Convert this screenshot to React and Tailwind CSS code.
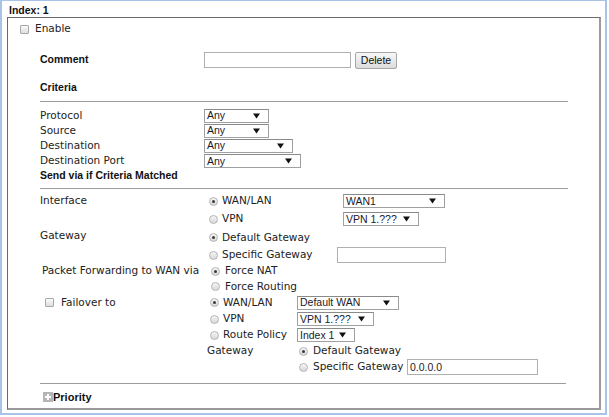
import React from 'react'

const LBL = "font-['DejaVu_Sans',sans-serif] text-[10.5px] text-[#222]"
const BOLD = "font-['Liberation_Sans',Arial,sans-serif] text-[10.5px] font-bold text-[#111]"

/* ── small form bits ─────────────────────────────────────────── */
const Check = () => (
  <span className="inline-block w-[9px] h-[9px] rounded-[1px] border border-[#a8a8a8] bg-gradient-to-b from-[#fafafa] to-[#dedede] shrink-0" />
)

const Radio = ({ on }) => (
  <span className="inline-flex items-center justify-center w-[9px] h-[9px] rounded-full border border-[#b4b4b4] bg-gradient-to-b from-[#f6f6f6] to-[#d8d8d8] shrink-0">
    {on && <span className="w-[3px] h-[3px] rounded-full bg-[#3a3a3a]" />}
  </span>
)

const Sel = ({ w, value }) => (
  <div className={`${w} h-[14px] flex items-center justify-between border border-[#a0a0a0] border-t-[#8a8a8a] bg-white pl-[2px] pr-[8px] shrink-0`}>
    <span className="font-['Liberation_Sans',Arial,sans-serif] text-[10.5px] leading-none text-[#1a1a2a]">{value}</span>
    <svg width="7" height="6" viewBox="0 0 7 6"><path d="M0 0.5h7L3.5 5.5z" fill="#111" /></svg>
  </div>
)

const Field = ({ w, value = '' }) => (
  <div className={`${w} h-[16px] flex items-center border border-[#b0b0b0] bg-white px-[2px] shrink-0`}>
    <span className="font-['Liberation_Sans',Arial,sans-serif] text-[10.5px] leading-none text-[#222]">{value}</span>
  </div>
)

const Opt = ({ on, children, gap = 'gap-[4px]' }) => (
  <div className={`flex items-center ${gap}`}>
    <Radio on={on} />
    <span className={LBL}>{children}</span>
  </div>
)

const Rule = ({ w = 'w-[528px]' }) => <div className={`ml-[32px] ${w} h-px bg-[#9c9c9c]`} />

export default function App() {
  return (
    <div className="w-[609px] h-[417px] bg-white">
      <div className="w-[607px] h-[415px] border-2 border-[#a9c2e7] border-t-[1px]">
        {/* header */}
        <div className={`h-[16px] pt-[3px] pl-[7px] flex items-center ${BOLD} text-[10.5px]`}>Index: 1</div>

        {/* main box */}
        <div className="ml-[5px] w-[594px] h-[393px] border border-[#6a6a6a] border-r-2 border-b-2 border-r-[#9a9a9a] border-b-[#9a9a9a]">
          {/* Enable */}
          <div className="mt-[3px] h-[16px] pl-[12px] flex items-center gap-[6px]">
            <Check />
            <span className={LBL}>Enable</span>
          </div>

          {/* Comment */}
          <div className="mt-[14px] h-[18px] pl-[32px] flex items-center">
            <span className={`w-[164px] ${BOLD}`}>Comment</span>
            <Field w="w-[147px]" />
            <button className="ml-[4px] w-[42px] h-[17px] rounded-[2px] border border-[#a6a6a6] bg-gradient-to-b from-[#f8f8f8] to-[#dcdcdc] font-['Liberation_Sans',Arial,sans-serif] text-[10.5px] text-[#111] leading-none">
              Delete
            </button>
          </div>

          {/* Criteria */}
          <div className={`mt-[11px] h-[16px] pl-[32px] flex items-center ${BOLD}`}>Criteria</div>
          <div className="mt-[5px]"><Rule /></div>

          <div className="mt-[6px] pl-[32px]">
            <div className="h-[15px] flex items-center">
              <span className={`w-[164px] ${LBL}`}>Protocol</span>
              <Sel w="w-[65px]" value="Any" />
            </div>
            <div className="h-[15px] flex items-center">
              <span className={`w-[164px] ${LBL}`}>Source</span>
              <Sel w="w-[65px]" value="Any" />
            </div>
            <div className="h-[15px] flex items-center">
              <span className={`w-[164px] ${LBL}`}>Destination</span>
              <Sel w="w-[89px]" value="Any" />
            </div>
            <div className="h-[16px] flex items-center">
              <span className={`w-[164px] ${LBL}`}>Destination Port</span>
              <Sel w="w-[97px]" value="Any" />
            </div>
            <div className={`h-[14px] flex items-center ${BOLD}`}>Send via if Criteria Matched</div>
          </div>
          <div className="mt-[5px]"><Rule /></div>

          {/* send via block */}
          <div className="mt-[3px] pl-[32px]">
            <div className="h-[18px] flex items-center">
              <span className={`w-[169px] ${LBL}`}>Interface</span>
              <div className="w-[134px]"><Opt on>WAN/LAN</Opt></div>
              <Sel w="w-[102px]" value="WAN1" />
            </div>
            <div className="h-[18px] flex items-center">
              <span className="w-[169px]" />
              <div className="w-[134px]"><Opt>VPN</Opt></div>
              <Sel w="w-[76px]" value="VPN 1.???" />
            </div>
            <div className="h-[19px] flex items-center">
              <span className={`w-[169px] -mt-[3px] ${LBL}`}>Gateway</span>
              <Opt on>Default Gateway</Opt>
            </div>
            <div className="h-[16px] flex items-center">
              <span className="w-[169px]" />
              <div className="w-[128px]"><Opt>Specific Gateway</Opt></div>
              <Field w="w-[109px]" />
            </div>
            <div className="h-[16px] flex items-center">
              <span className={`w-[171px] pl-[2px] ${LBL}`}>Packet Forwarding to WAN via</span>
              <Opt on gap="gap-[5px]">Force NAT</Opt>
            </div>
            <div className="h-[15px] flex items-center">
              <span className="w-[171px]" />
              <Opt gap="gap-[5px]">Force Routing</Opt>
            </div>
            <div className="h-[17px] flex items-center">
              <div className="w-[170px] pl-[5px] flex items-center gap-[7px]">
                <Check />
                <span className={LBL}>Failover to</span>
              </div>
              <div className="w-[87px]"><Opt on>WAN/LAN</Opt></div>
              <Sel w="w-[102px]" value="Default WAN" />
            </div>
            <div className="h-[16px] flex items-center">
              <span className="w-[170px]" />
              <div className="w-[87px]"><Opt>VPN</Opt></div>
              <Sel w="w-[77px]" value="VPN 1.???" />
            </div>
            <div className="h-[16px] flex items-center">
              <span className="w-[170px]" />
              <div className="w-[87px]"><Opt>Route Policy</Opt></div>
              <Sel w="w-[58px]" value="Index 1" />
            </div>
            <div className="h-[16px] flex items-center">
              <span className="w-[167px]" />
              <span className={`w-[92px] ${LBL}`}>Gateway</span>
              <Opt on gap="gap-[5px]">Default Gateway</Opt>
            </div>
            <div className="h-[16px] flex items-center">
              <span className="w-[259px]" />
              <div className="w-[108px]"><Opt gap="gap-[5px]">Specific Gateway</Opt></div>
              <Field w="w-[131px]" value="0.0.0.0" />
            </div>
          </div>
          <div className="mt-[8px]"><Rule w="w-[526px]" /></div>

          {/* Priority */}
          <div className="mt-[6px] h-[14px] pl-[35px] flex items-center">
            <span className="w-[10px] h-[10px] bg-[#b5b5b5] flex items-center justify-center">
              <svg width="8" height="8" viewBox="0 0 8 8"><path d="M3 1h2v2h2v2H5v2H3V5H1V3h2z" fill="#fff" /></svg>
            </span>
            <span className={`${BOLD} text-[11px]`}>Priority</span>
          </div>
        </div>
      </div>
    </div>
  )
}
